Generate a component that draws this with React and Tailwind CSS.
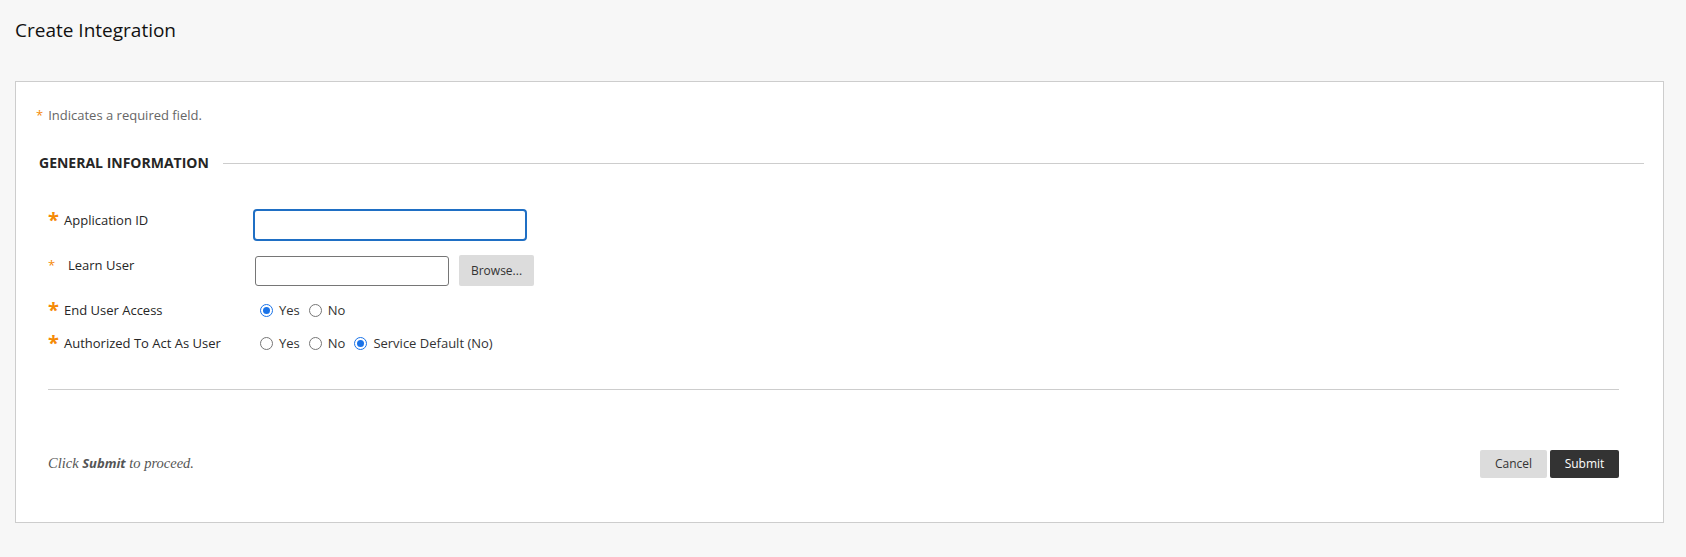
import React from 'react';

const font = { fontFamily: '"Open Sans", "Noto Sans", sans-serif' };

const Star = ({ big = true }) =>
  big ? (
    <span className="w-[16px] text-[20px] leading-[18px] font-bold text-[#f58a07]">*</span>
  ) : (
    <span className="w-[20px] text-[13px] leading-[18px] text-[#f58a07]">*</span>
  );

const Radio = ({ checked, label }) => (
  <label className="flex items-center gap-[6px] mr-[9px]">
    {checked ? (
      <span className="w-[13px] h-[13px] rounded-full border border-[#1a73e8] bg-white flex items-center justify-center">
        <span className="w-[7px] h-[7px] rounded-full bg-[#1a73e8]"></span>
      </span>
    ) : (
      <span className="w-[13px] h-[13px] rounded-full border border-[#767676] bg-white"></span>
    )}
    <span className="text-[13px] leading-[18px] text-[#333]">{label}</span>
  </label>
);

const Row = ({ big, label, children, className }) => (
  <div className={`flex items-start ${className}`}>
    <div className="w-[207px] flex items-start text-[13px] leading-[18px] text-[#262626]">
      <Star big={big} />
      <span>{label}</span>
    </div>
    {children}
  </div>
);

const App = () => {
  return (
    <div className="min-h-[557px] bg-[#f7f7f7] pt-4 pb-[34px]" style={font}>
      <h1 className="pl-[15px] text-[19px] leading-7 text-[#111]">Create Integration</h1>

      <div className="mt-[37px] ml-[15px] mr-[22px] border border-[#cdcdcd] bg-white pt-[24px] pb-[44px]">
        <p className="pl-[20px] text-[13px] leading-[18px] text-[#666]">
          <span className="text-[#f58a07] mr-[5px]">*</span>Indicates a required field.
        </p>

        <div className="mt-[29px] pl-[23px] pr-[19px] flex items-center">
          <h2 className="text-[14px] leading-5 font-bold text-[#262626] uppercase">General Information</h2>
          <div className="ml-[14px] flex-1 h-px bg-[#cdcdcd]"></div>
        </div>

        <div className="pl-[32px]">
          <Row big label="Application ID" className="mt-[38px]">
            <input
              type="text"
              className="-mt-[2px] -ml-[2px] w-[274px] h-[32px] rounded-[4px] border-2 border-[#1f6fc4] bg-white outline-none"
            />
          </Row>

          <Row big={false} label="Learn User" className="mt-[15px]">
            <div className="-mt-[1px] flex items-center gap-[10px]">
              <input
                type="text"
                className="w-[194px] h-[30px] rounded-[3px] border border-[#767676] bg-white outline-none"
              />
              <button className="w-[75px] h-[31px] bg-[#dcdcdc] text-[12px] text-[#333] rounded-[2px]">Browse...</button>
            </div>
          </Row>

          <Row big label="End User Access" className="mt-[15px]">
            <div className="pl-[5px] h-[18px] flex items-center">
              <Radio checked label="Yes" />
              <Radio label="No" />
            </div>
          </Row>

          <Row big label="Authorized To Act As User" className="mt-[15px]">
            <div className="pl-[5px] h-[18px] flex items-center">
              <Radio label="Yes" />
              <Radio label="No" />
              <Radio checked label="Service Default (No)" />
            </div>
          </Row>
        </div>

        <div className="mt-[37px] ml-[32px] mr-[44px] h-px bg-[#cdcdcd]"></div>

        <div className="mt-[60px] ml-[32px] mr-[44px] flex items-center justify-between">
          <p className="text-[14.5px] italic text-[#555]" style={{ fontFamily: '"Liberation Serif", "DejaVu Serif", serif' }}>
            Click <b className="font-bold text-[13px]" style={font}>Submit</b> to proceed.
          </p>
          <div className="flex items-center gap-[3px]">
            <button className="w-[67px] h-[28px] rounded-[2px] bg-[#dcdcdc] text-[12px] text-[#333]">Cancel</button>
            <button className="w-[69px] h-[28px] rounded-[2px] bg-[#333] text-[12px] text-white">Submit</button>
          </div>
        </div>
      </div>
    </div>
  );
};

export default App;
